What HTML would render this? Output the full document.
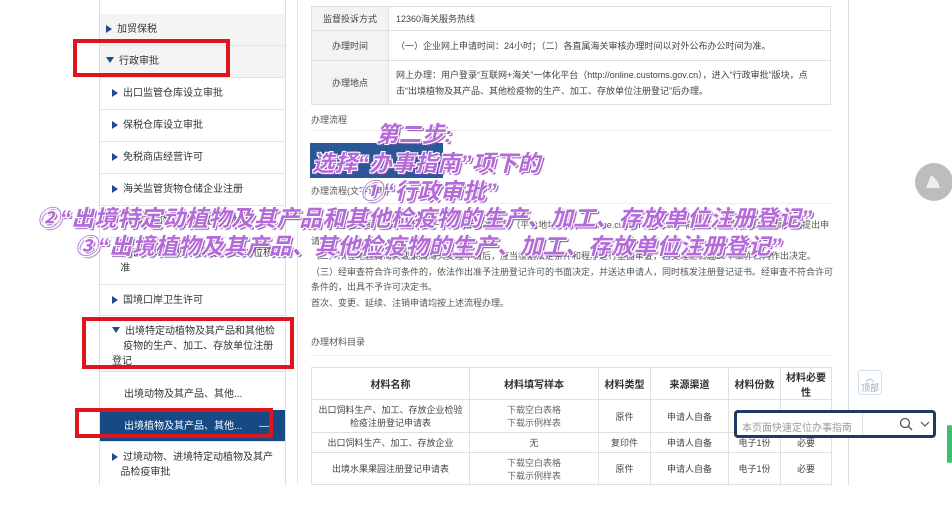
<!DOCTYPE html><html><head><meta charset="utf-8"><style>
*{margin:0;padding:0;box-sizing:border-box}
body{width:952px;height:518px;background:#fff;position:relative;overflow:hidden;font-family:"Liberation Sans","Noto Sans CJK SC",sans-serif;color:#333}
.a{position:absolute}
.side{left:99px;top:0;width:187px;height:485px;border-left:1px solid #ddd;border-right:1px solid #ddd}
.it{position:absolute;left:0;width:185px;border-bottom:1px solid #e4e4e4;font-size:10px;color:#333;line-height:15px}
.tri{display:inline-block;width:0;height:0;border-left:6px solid #1d4e89;border-top:4px solid transparent;border-bottom:4px solid transparent;margin-right:5px;vertical-align:-1px}
.trd{display:inline-block;width:0;height:0;border-top:6px solid #1d4e89;border-left:4px solid transparent;border-right:4px solid transparent;margin-right:5px;vertical-align:1px}
.red{position:absolute;border:4px solid #e0141e}
.t{font-size:9px;color:#555}
table{border-collapse:collapse}
td{border:1px solid #e0e0e0;font-size:9px;color:#444;text-align:center}
.ov{position:absolute;white-space:nowrap;font-size:22.5px;font-weight:bold;font-style:italic;color:#b46ad8;text-shadow:-1px -1px 0 #fff,1px -1px 0 #fff,-1px 1px 0 #fff,1px 1px 0 #fff,2px 2px 1px #8a4cb0;letter-spacing:0.3px}
</style></head><body>
<div class="a side">
 <div class="it" style="top:14px;height:32px;background:#f4f4f4;padding:8px 0 0 6px"><span class="tri"></span>加贸保税</div>
 <div class="it" style="top:46px;height:32px;background:#f4f4f4;padding:8px 0 0 6px"><span class="trd"></span>行政审批</div>
 <div class="it" style="top:78px;height:32px;padding:8px 0 0 12px"><span class="tri"></span>出口监管仓库设立审批</div>
 <div class="it" style="top:110px;height:32px;padding:8px 0 0 12px"><span class="tri"></span>保税仓库设立审批</div>
 <div class="it" style="top:142px;height:32px;padding:8px 0 0 12px"><span class="tri"></span>免税商店经营许可</div>
 <div class="it" style="top:174px;height:32px;padding:8px 0 0 12px"><span class="tri"></span>海关监管货物仓储企业注册</div>
 <div class="it" style="top:206px;height:32px;padding:8px 0 0 12px"><span class="tri"></span>出境动植物检疫处理单位核准</div>
 <div class="it" style="top:238px;height:47px;padding:8px 6px 0 12px"><span class="tri"></span>进出境动植物检疫除害处理单位核<br>&nbsp;&nbsp;&nbsp;准</div>
 <div class="it" style="top:285px;height:31px;padding:8px 0 0 12px"><span class="tri"></span>国境口岸卫生许可</div>
 <div class="it" style="top:316px;height:56px;padding:8px 8px 0 12px;overflow:hidden"><span class="trd"></span>出境特定动植物及其产品和其他检<br>&nbsp;&nbsp;&nbsp;&nbsp;疫物的生产、加工、存放单位注册<br>登记</div>
 <div class="it" style="top:372px;height:38px;padding:15px 0 0 24px;border:none">出境动物及其产品、其他...</div>
 <div class="it" style="top:410px;height:32px;padding:9px 0 0 24px;background:#154a85;color:#fff">出境植物及其产品、其他... <span style="margin-left:14px">—</span></div>
 <div class="it" style="top:442px;height:43px;padding:8px 6px 0 12px;border:none"><span class="tri"></span>过境动物、进境特定动植物及其产<br>&nbsp;&nbsp;&nbsp;品检疫审批</div>
</div>
<div class="red" style="left:73px;top:39px;width:157px;height:38px"></div>
<div class="red" style="left:82px;top:317px;width:212px;height:52px"></div>
<div class="red" style="left:75px;top:408px;width:198px;height:30px"></div>
<div class="a" style="left:297px;top:0;width:1px;height:485px;background:#e6e6e6"></div>
<div class="a" style="left:848px;top:0;width:1px;height:485px;background:#ddd"></div>
<table class="a" style="left:311px;top:6px;width:520px">
<tr style="height:24px"><td style="width:77px;background:#f3f3f3">监督投诉方式</td><td style="text-align:left;padding-left:7px">12360海关服务热线</td></tr>
<tr style="height:30px"><td style="background:#f3f3f3">办理时间</td><td style="text-align:left;padding-left:7px">（一）企业网上申请时间：24小时；（二）各直属海关审核办理时间以对外公布办公时间为准。</td></tr>
<tr style="height:44px"><td style="background:#f3f3f3">办理地点</td><td style="text-align:left;padding:0 7px;line-height:16px">网上办理：用户登录“互联网+海关”一体化平台（http://online.customs.gov.cn），进入“行政审批”版块，点击“出境植物及其产品、其他检疫物的生产、加工、存放单位注册登记”后办理。</td></tr>
</table>
<div class="a t" style="left:311px;top:113px">办理流程</div>
<div class="a" style="left:311px;top:130px;width:520px;height:1px;background:#eee"></div>
<div class="a" style="left:310px;top:143px;width:133px;height:35px;background:#2b5797"></div>
<div class="a t" style="left:311px;top:184px">办理流程(文字说明)</div>
<div class="a" style="left:311px;top:203px;width:520px;height:1px;background:#eee"></div>
<div class="a t" style="left:311px;top:218px;line-height:15.5px;width:525px">（一）企业登录“互联网+海关”一体化网上办事平台（平台地址：http://online.customs.gov.cn）向所在地直属海关或隶属海关提出申请。<br>（二）所在地直属海关或隶属海关受理申请后，应当根据法定条件和程序进行全面审查，自受理之日起20个工作日内作出决定。<br>（三）经审查符合许可条件的，依法作出准予注册登记许可的书面决定，并送达申请人，同时核发注册登记证书。经审查不符合许可条件的，出具不予许可决定书。<br>首次、变更、延续、注销申请均按上述流程办理。</div>
<div class="a t" style="left:311px;top:335px">办理材料目录</div>
<div class="a" style="left:311px;top:355px;width:520px;height:1px;background:#eee"></div>
<table class="a" style="left:311px;top:367px;width:521px">
<tr style="height:32px;font-weight:bold"><td style="width:158px;font-size:10px;color:#333">材料名称</td><td style="width:129px;font-size:10px;color:#333">材料填写样本</td><td style="width:52px;font-size:10px;color:#333">材料类型</td><td style="width:78px;font-size:10px;color:#333">来源渠道</td><td style="width:52px;font-size:10px;color:#333">材料份数</td><td style="font-size:10px;color:#333">材料必要<br>性</td></tr>
<tr style="height:33px"><td>出口饲料生产、加工、存放企业检验<br>检疫注册登记申请表</td><td style="color:#666">下载空白表格<br>下载示例样表</td><td>原件</td><td>申请人自备</td><td>电子1份</td><td>必要</td></tr>
<tr style="height:20px"><td>出口饲料生产、加工、存放企业</td><td>无</td><td>复印件</td><td>申请人自备</td><td>电子1份</td><td>必要</td></tr>
<tr style="height:32px"><td>出境水果果园注册登记申请表</td><td style="color:#666">下载空白表格<br>下载示例样表</td><td>原件</td><td>申请人自备</td><td>电子1份</td><td>必要</td></tr>
</table>
<div class="a" style="left:858px;top:370px;width:24px;height:25px;border:1px solid #cfe0ef;border-radius:3px;font-size:9px;color:#9ab;text-align:center;line-height:10px;padding-top:2px">︿<br>顶部</div>
<div class="a" style="left:734px;top:410px;width:202px;height:28px;border:3px solid #1f3864;border-radius:4px;background:#fff">
 <div class="a" style="left:5px;top:6px;font-size:10px;color:#999">本页面快速定位办事指南</div>
 <div class="a" style="left:125px;top:0;width:1px;height:22px;background:#ddd"></div>
 <svg class="a" style="left:162px;top:4px" width="34" height="14" viewBox="0 0 34 14"><circle cx="6" cy="6" r="4.5" fill="none" stroke="#555" stroke-width="1.3"/><path d="M9.5 9.5L13 13" stroke="#555" stroke-width="1.4"/><path d="M22 5l4 4 4-4" fill="none" stroke="#555" stroke-width="1.2"/></svg>
</div>
<div class="a" style="left:915px;top:163px;width:38px;height:38px;border-radius:50%;background:#bdbdbd"></div>
<svg class="a" style="left:922px;top:172px" width="20" height="18"><path d="M4 16 L9 3 Q16 8 18 16 Z" fill="#eee"/></svg>
<div class="a" style="left:947px;top:425px;width:5px;height:38px;background:#3cc06a;border-radius:2px"></div>
<div class="ov" style="left:376px;top:117px">第二步:</div>
<div class="ov" style="left:312px;top:146px">选择“办事指南”项下的</div>
<div class="ov" style="left:360px;top:174px">①“行政审批”</div>
<div class="ov" style="left:37px;top:201px">②“出境特定动植物及其产品和其他检疫物的生产、加工、存放单位注册登记”</div>
<div class="ov" style="left:75px;top:229px">③“出境植物及其产品、其他检疫物的生产、加工、存放单位注册登记”</div>
</body></html>
